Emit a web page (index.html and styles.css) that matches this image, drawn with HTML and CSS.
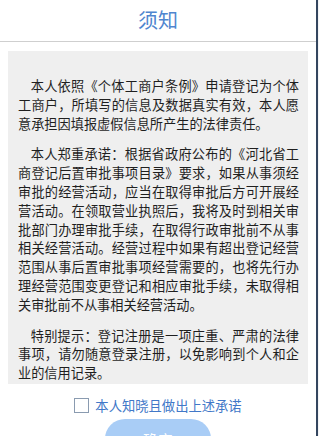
FILE: index.html
```html
<!DOCTYPE html>
<html lang="zh-CN">
<head>
<meta charset="UTF-8">
<meta name="viewport" content="width=device-width, initial-scale=1.0">
<title>须知</title>
<link rel="stylesheet" href="styles.css">
</head>
<body>
<div class="page">
  <header class="topbar">
    <h1>须知</h1>
  </header>

  <div class="notice">
    <p>&nbsp;&nbsp;&nbsp;&nbsp;本人依照《个体工商户条例》申请登记为个体工商户，所填写的信息及数据真实有效，本人愿意承担因填报虚假信息所产生的法律责任。</p>
    <p>&nbsp;&nbsp;&nbsp;&nbsp;本人郑重承诺：根据省政府公布的《河北省工商登记后置审批事项目录》要求，如果从事须经审批的经营活动，应当在取得审批后方可开展经营活动。在领取营业执照后，我将及时到相关审批部门办理审批手续，在取得行政审批前不从事相关经营活动。经营过程中如果有超出登记经营范围从事后置审批事项经营需要的，也将先行办理经营范围变更登记和相应审批手续，未取得相关审批前不从事相关经营活动。</p>
    <p>&nbsp;&nbsp;&nbsp;&nbsp;特别提示：登记注册是一项庄重、严肃的法律事项，请勿随意登录注册，以免影响到个人和企业的信用记录。</p>
  </div>

  <label class="agree">
    <span class="checkbox"></span>
    <span>本人知晓且做出上述承诺</span>
  </label>

  <div class="actions">
    <button class="confirm">确定</button>
  </div>
</div>
</body>
</html>
```

FILE: styles.css
```css
html, body, div, h1, p, button, label {
  margin: 0;
  padding: 0;
  box-sizing: border-box;
}

body {
  background-color: #f3f4f6;
  font-family: "Noto Sans CJK SC", "Noto Sans", sans-serif;
  overflow: hidden;
}

.page {
  width: 318px;
  height: 436px;
  background-color: #fff;
  border-right: 2px solid #34465f;
}

.topbar {
  height: 41px;
  border-bottom: 1px solid #cfcfcf;
  text-align: center;
}

.topbar h1 {
  font-size: 20px;
  font-weight: normal;
  line-height: 40px;
  color: #4f86cf;
}

.notice {
  margin: 9px 8px 0 8px;
  width: 300px;
  height: 333px;
  padding: 14px 9px 0 10px;
  background-color: #efefef;
  overflow: hidden;
}

.notice p {
  font-size: 13.2px;
  line-height: 18.8px;
  color: #1f1f1f;
  text-align: justify;
  margin-top: 12px;
}

.agree {
  display: flex;
  align-items: center;
  justify-content: center;
  gap: 6px;
  margin-top: 11px;
  height: 20px;
  font-size: 13.3px;
  color: #4178c8;
}

.checkbox {
  width: 13px;
  height: 13px;
  border: 1px solid #8a9bb0;
  background-color: #fff;
}

.actions {
  display: flex;
  justify-content: center;
  margin-top: 4px;
}

.confirm {
  width: 106px;
  height: 40px;
  border: none;
  border-radius: 20px;
  background-color: #a9cdf6;
  color: #fff;
  font-family: inherit;
  font-size: 15px;
}
```
